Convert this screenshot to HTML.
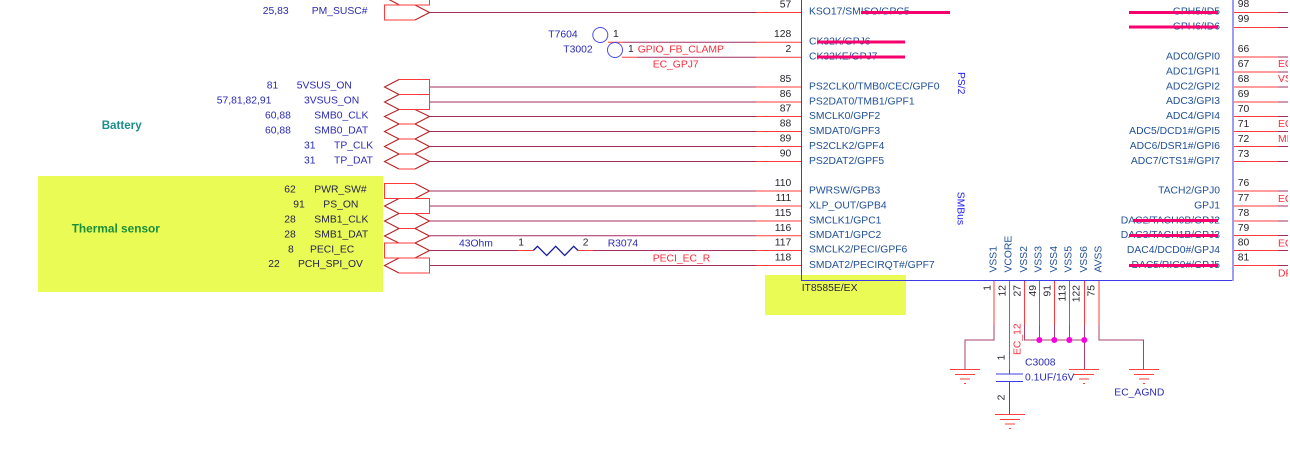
<!DOCTYPE html>
<html><head><meta charset="utf-8"><style>
html,body{margin:0;padding:0;background:#fff;width:1290px;height:450px;overflow:hidden}
svg{display:block}
text{font-family:"Liberation Sans",Arial,sans-serif;font-size:10.35px}
.n{fill:#2a2ab4}.k{fill:#26262e}.p{fill:#1f4f95}.r{fill:#ff2a3a}.y{fill:#22224a}
.e{text-anchor:end}
.w{stroke:#a32c62;stroke-width:1;fill:none}
.d{stroke:#ff3a3a;stroke-width:1;fill:none}
.s{fill:none;stroke:#b82222;stroke-width:1.1}
.f{fill:none;stroke:#ff3a3a;stroke-width:1}
.m{stroke:#f5006e;stroke-width:3}
.g{stroke:#ff4040;stroke-width:1;fill:none}
</style></head><body>
<svg width="1290" height="450" viewBox="0 0 1290 450" xmlns="http://www.w3.org/2000/svg">
<rect x="38" y="176" width="345" height="116" fill="#ebfb56"/>
<rect x="765" y="275" width="141" height="40" fill="#ebfb56"/>

<!-- horizontal nets left -->
<g class="w">
<path d="M430 12.5H756M430 87H756M430 102H756M430 116.5H756M430 131.5H756M430 146.5H756M430 161.5H756M430 191H756M430 206H756M430 221H756M430 235.8H756M430 250.5H518M593 250.5H756M430 265.5H756M623 42.2H756M637 57.2H756"/>
</g>
<g class="d">
<path d="M756 12.5H801M756 87H801M756 102H801M756 116.5H801M756 131.5H801M756 146.5H801M756 161.5H801M756 191H801M756 206H801M756 221H801M756 235.8H801M756 250.5H801M756 265.5H801M756 42.2H801M756 57.2H801M608 42.2H623M622 57.2H637M518 250.5H533M578 250.5H593"/>
</g>
<path d="M533.3 250.5L537.5 246.3L546.7 255.5L555.7 246.3L564.7 255.5L573.7 246.3L578 250.5" fill="none" stroke="#1a1aa0" stroke-width="1.3"/>

<!-- left connectors: slanted edges -->
<g class="s">
<path d="M399.5 5L388 -1"/>
<path d="M415 5L429.5 12.5L415 20"/>
<path d="M399 79.5L384.5 87L399 94.5"/>
<path d="M399 94.5L384.5 102L399 109.5"/>
<path d="M415 109.5L429.5 116.5L415 124M399 109.5L384.5 116.5L399 124"/>
<path d="M415 124L429.5 131.5L415 139M399 124L384.5 131.5L399 139"/>
<path d="M415 139L429.5 146.5L415 154M399 139L384.5 146.5L399 154"/>
<path d="M415 154L429.5 161.5L415 169M399 154L384.5 161.5L399 169"/>
<path d="M415 183.5L429.5 191L415 198.5"/>
<path d="M399 198.5L384.5 206L399 213.5"/>
<path d="M415 213.5L429.5 221L415 228.5M399 213.5L384.5 221L399 228.5"/>
<path d="M415 228.5L429.5 236L415 243M399 228.5L384.5 236L399 243"/>
<path d="M415 243L429.5 250.5L415 258"/>
<path d="M399 258L384.5 265.5L399 273"/>
</g>
<!-- left connectors: flat edges -->
<g class="f">
<path d="M429.5 0V5H399.5"/>
<path d="M415 5H384.5V20H415"/>
<path d="M399 79.5H429.5V94.5H399"/>
<path d="M399 94.5H429.5V109.5H399"/>
<path d="M399 109.5H415M399 124H415M399 139H415M399 154H415M399 169H415"/>
<path d="M415 183.5H384.5V198.5H415"/>
<path d="M399 198.5H429.5V213.5H399"/>
<path d="M399 213.5H415M399 228.5H415M399 243H415"/>
<path d="M415 243H384.5V258H415"/>
<path d="M399 258H429.5V273H399"/>
</g>

<!-- chip -->
<path d="M801.5 0V280.5H1232" fill="none" stroke="#3c3ce6" stroke-width="1"/>
<rect x="1232" y="0" width="2" height="281" fill="#9c9cf4"/>

<!-- test points -->
<circle cx="600.3" cy="35" r="7.5" fill="none" stroke="#4a4af0"/>
<circle cx="615" cy="50" r="7.5" fill="none" stroke="#4a4af0"/>

<!-- right nets -->
<g class="d">
<path d="M1234 12.5H1278M1234 27.5H1278M1234 57H1278M1234 72H1278M1234 87H1278M1234 102H1278M1234 116.5H1278M1234 131.5H1278M1234 146.5H1278M1234 161.5H1278M1234 191H1278M1234 206H1278M1234 221H1278M1234 235.5H1278M1234 250.5H1278M1234 265.5H1278"/>
</g>
<g class="w">
<path d="M1278 12.5H1288M1278 27.5H1288M1278 57H1288M1278 72H1288M1278 87H1288M1278 102H1288M1278 116.5H1288M1278 131.5H1288M1278 146.5H1288M1278 161.5H1288M1278 191H1288M1278 206H1288M1278 221H1288M1278 235.5H1288M1278 250.5H1288M1278 265.5H1288"/>
</g>

<!-- bottom pins -->
<g class="d">
<path d="M994 281V325M1009.5 281V370M1024.5 281V325M1039.5 281V325M1054.5 281V325M1069.5 281V325M1084.5 281V325M1099 281V325"/>
</g>
<path d="M994 325V340H965V369" fill="none" stroke="#a8406c"/>
<path d="M1009.5 370V374M1009.5 382V414" fill="none" stroke="#a32c62"/>
<path d="M1024.5 325V340H1084.5V369M1039.5 325V340M1054.5 325V340M1069.5 325V340M1084.5 325V340" fill="none" stroke="#a8406c"/>
<path d="M1099 325V340H1143.5V369" fill="none" stroke="#a8406c"/>
<path d="M996 374H1023M996 381.5H1023" stroke="#3c3ce6" fill="none"/>
<g fill="#fa00e0">
<circle cx="1039.3" cy="340" r="3"/><circle cx="1054.3" cy="340" r="3"/><circle cx="1069.3" cy="340" r="3"/><circle cx="1084.3" cy="340" r="3"/>
</g>
<g class="g">
<path d="M950 369.5H980M955 374.5H975M960 379H970M964 383.5H966"/>
<path d="M1069 369.5H1099M1074 374.5H1094M1079 379H1089M1083 383.5H1085"/>
<path d="M1129 369.5H1159M1134 374.5H1154M1139 379H1149M1143 383.5H1145"/>
<path d="M995 414.5H1025M1000 419.5H1020M1005 424H1015M1009 428.5H1011"/>
</g>

<!-- left labels -->
<text x="262.7" y="14" class="n">25,83</text><text x="311.7" y="14" class="n">PM_SUSC#</text>
<text x="266.7" y="88.7" class="n">81</text><text x="296.7" y="88.7" class="n">5VSUS_ON</text>
<text x="216.7" y="103.7" class="n">57,81,82,91</text><text x="304" y="103.7" class="n">3VSUS_ON</text>
<text x="265" y="118.5" class="n">60,88</text><text x="314.3" y="118.5" class="n">SMB0_CLK</text>
<text x="265" y="133.3" class="n">60,88</text><text x="314.3" y="133.3" class="n">SMB0_DAT</text>
<text x="304" y="148.3" class="n">31</text><text x="334" y="148.3" class="n">TP_CLK</text>
<text x="304" y="163.3" class="n">31</text><text x="334" y="163.3" class="n">TP_DAT</text>
<text x="101.7" y="129" style="font-weight:bold;font-size:11.6px;fill:#1a8f88">Battery</text>
<text x="71.7" y="232.5" style="font-weight:bold;font-size:11.85px;fill:#1a8f3a">Thermal sensor</text>
<text x="284.3" y="192.7" class="y">62</text><text x="314.3" y="192.7" class="y">PWR_SW#</text>
<text x="293.3" y="207.7" class="y">91</text><text x="323.3" y="207.7" class="y">PS_ON</text>
<text x="284.3" y="222.7" class="y">28</text><text x="314.3" y="222.7" class="y">SMB1_CLK</text>
<text x="284.3" y="237.7" class="y">28</text><text x="314.3" y="237.7" class="y">SMB1_DAT</text>
<text x="288" y="252.7" class="y">8</text><text x="310" y="252.7" class="y">PECI_EC</text>
<text x="268.3" y="267" class="y">22</text><text x="298" y="267" class="y">PCH_SPI_OV</text>

<!-- mid labels -->
<text x="548.3" y="37.7" class="n">T7604</text><text x="613" y="37" class="k">1</text>
<text x="563.3" y="52.7" class="n">T3002</text><text x="628" y="52" class="k">1</text>
<text x="637.7" y="52.7" class="r">GPIO_FB_CLAMP</text>
<text x="652.7" y="67.7" class="r">EC_GPJ7</text>
<text x="459" y="246.4" class="n">43Ohm</text>
<text x="518.3" y="245.7" class="k">1</text><text x="582.7" y="245.7" class="k">2</text>
<text x="607.7" y="246.4" class="n">R3074</text>
<text x="652.7" y="261.4" class="r">PECI_EC_R</text>

<!-- left pin numbers -->
<g class="k">
<text x="791.3" y="7.3" class="e">57</text>
<text x="791.3" y="37" class="e">128</text>
<text x="791.3" y="52" class="e">2</text>
<text x="791.3" y="82" class="e">85</text>
<text x="791.3" y="97" class="e">86</text>
<text x="791.3" y="111.5" class="e">87</text>
<text x="791.3" y="126.7" class="e">88</text>
<text x="791.3" y="141.5" class="e">89</text>
<text x="791.3" y="156.5" class="e">90</text>
<text x="791.3" y="186" class="e">110</text>
<text x="791.3" y="201" class="e">111</text>
<text x="791.3" y="216" class="e">115</text>
<text x="791.3" y="231" class="e">116</text>
<text x="791.3" y="245.5" class="e">117</text>
<text x="791.3" y="260.5" class="e">118</text>
</g>

<!-- left pin names -->
<g class="p">
<text x="809" y="14.5">KSO17/SMISO/GPC5</text>
<text x="809" y="44.5">CK32K/GPJ6</text>
<text x="809" y="59.5">CK32KE/GPJ7</text>
<text x="809" y="89.3">PS2CLK0/TMB0/CEC/GPF0</text>
<text x="809" y="104.3">PS2DAT0/TMB1/GPF1</text>
<text x="809" y="119">SMCLK0/GPF2</text>
<text x="809" y="134">SMDAT0/GPF3</text>
<text x="809" y="149">PS2CLK2/GPF4</text>
<text x="809" y="164">PS2DAT2/GPF5</text>
<text x="809" y="193.7">PWRSW/GPB3</text>
<text x="809" y="208.7">XLP_OUT/GPB4</text>
<text x="809" y="223.5">SMCLK1/GPC1</text>
<text x="809" y="238">SMDAT1/GPC2</text>
<text x="809" y="252.7">SMCLK2/PECI/GPF6</text>
<text x="809" y="268">SMDAT2/PECIRQT#/GPF7</text>
</g>

<!-- right pin names -->
<g class="p">
<text x="1220" y="14.5" class="e">GPH5/ID5</text>
<text x="1220" y="29.5" class="e">GPH6/ID6</text>
<text x="1220" y="59.4" class="e">ADC0/GPI0</text>
<text x="1220" y="74.4" class="e">ADC1/GPI1</text>
<text x="1220" y="89.4" class="e">ADC2/GPI2</text>
<text x="1220" y="104" class="e">ADC3/GPI3</text>
<text x="1220" y="119" class="e">ADC4/GPI4</text>
<text x="1220" y="134" class="e">ADC5/DCD1#/GPI5</text>
<text x="1220" y="149" class="e">ADC6/DSR1#/GPI6</text>
<text x="1220" y="164" class="e">ADC7/CTS1#/GPI7</text>
<text x="1220" y="193.7" class="e">TACH2/GPJ0</text>
<text x="1220" y="208.7" class="e">GPJ1</text>
<text x="1220" y="223.7" class="e">DAC2/TACH0B/GPJ2</text>
<text x="1220" y="238" class="e">DAC3/TACH1B/GPJ3</text>
<text x="1220" y="253" class="e">DAC4/DCD0#/GPJ4</text>
<text x="1220" y="268" class="e">DAC5/RIC0#/GPJ5</text>
</g>

<!-- right pin numbers -->
<g class="k">
<text x="1237.7" y="7">98</text><text x="1237.7" y="22">99</text>
<text x="1237.7" y="52">66</text><text x="1237.7" y="67">67</text>
<text x="1237.7" y="82">68</text><text x="1237.7" y="97">69</text>
<text x="1237.7" y="112">70</text><text x="1237.7" y="127">71</text>
<text x="1237.7" y="142">72</text><text x="1237.7" y="157">73</text>
<text x="1237.7" y="186">76</text><text x="1237.7" y="201">77</text>
<text x="1237.7" y="216">78</text><text x="1237.7" y="231">79</text>
<text x="1237.7" y="245.5">80</text><text x="1237.7" y="260.5">81</text>
</g>
<g class="r">
<text x="1278" y="67">EC</text><text x="1278" y="82">VS</text>
<text x="1278" y="127">EC</text><text x="1278" y="142">MI</text>
<text x="1278" y="202">EC</text><text x="1278" y="246.4">EC</text>
<text x="1278" y="276.4">DF</text>
</g>
<rect x="1288" y="0" width="2" height="450" fill="#fff"/>

<!-- chip rotated labels -->
<g fill="#2020ff">
<text transform="translate(958 72) rotate(90)">PS/2</text>
<text transform="translate(957.5 191.7) rotate(90)">SMBus</text>
</g>
<g class="p">
<text transform="translate(996.7 272.5) rotate(-90)">VSS1</text>
<text transform="translate(1011.4 272.5) rotate(-90)">VCORE</text>
<text transform="translate(1027 272.5) rotate(-90)">VSS2</text>
<text transform="translate(1041.4 272.5) rotate(-90)">VSS3</text>
<text transform="translate(1057 272.5) rotate(-90)">VSS4</text>
<text transform="translate(1071.4 272.5) rotate(-90)">VSS5</text>
<text transform="translate(1087 272.5) rotate(-90)">VSS6</text>
<text transform="translate(1101.4 272.5) rotate(-90)">AVSS</text>
</g>
<g class="k" text-anchor="end">
<text transform="translate(990.4 285) rotate(-90)">1</text>
<text transform="translate(1005.4 285) rotate(-90)">12</text>
<text transform="translate(1020.4 285) rotate(-90)">27</text>
<text transform="translate(1036 285) rotate(-90)">49</text>
<text transform="translate(1050.4 285) rotate(-90)">91</text>
<text transform="translate(1065.4 285) rotate(-90)">113</text>
<text transform="translate(1079.4 285) rotate(-90)">122</text>
<text transform="translate(1094.4 285) rotate(-90)">75</text>
<text transform="translate(1004.7 357.5) rotate(-90)" text-anchor="middle">1</text>
<text transform="translate(1004.7 397.5) rotate(-90)" text-anchor="middle">2</text>
</g>
<text transform="translate(1020.4 355) rotate(-90)" class="r">EC_12</text>
<text x="1025" y="365.4" class="n">C3008</text>
<text x="1025" y="380.4" class="n">0.1UF/16V</text>
<text x="1114.3" y="395.4" class="n">EC_AGND</text>
<text x="801.7" y="291" class="k">IT8585E/EX</text>

<!-- strike marks -->
<g class="m">
<path d="M861 12.5H950M817 42H905M817 57H905M1129 12.5H1218M1129 27H1218M1133 220.5H1218M1129 235.5H1218M1129 265.5H1218"/>
</g>
</svg>
</body></html>
